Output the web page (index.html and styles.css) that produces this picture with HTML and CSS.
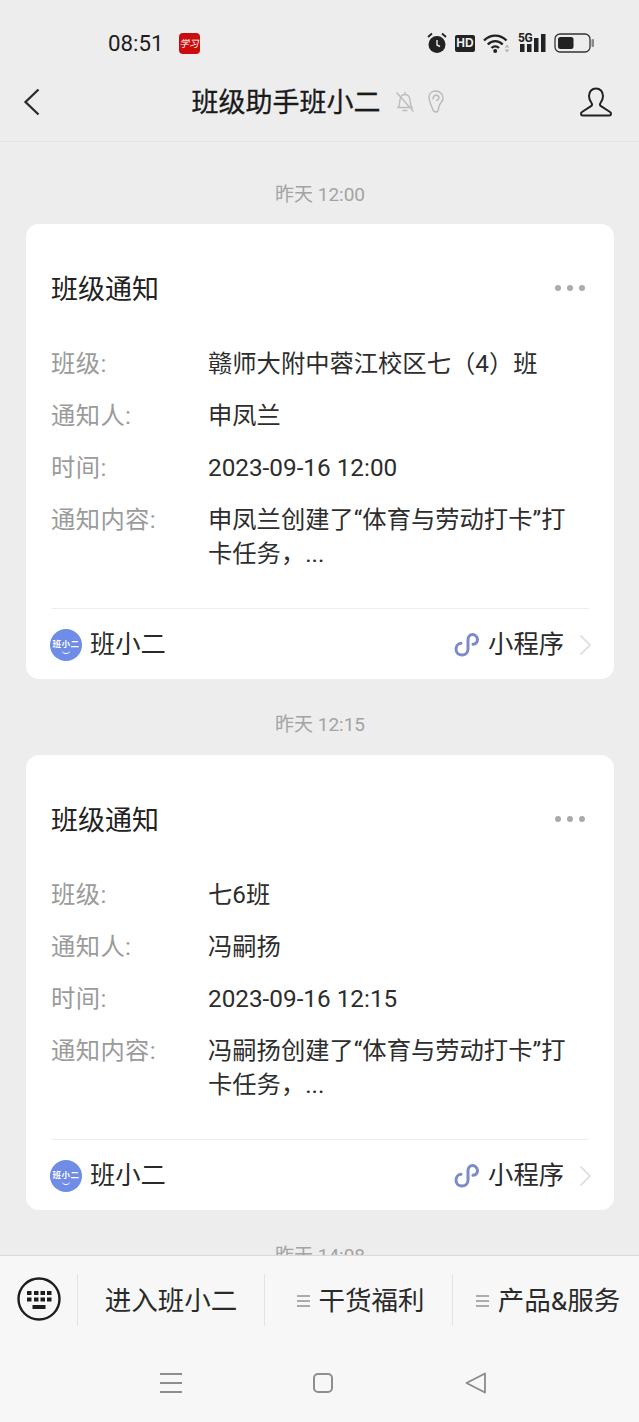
FILE: index.html
```html
<!DOCTYPE html>
<html lang="zh-CN">
<head>
<meta charset="utf-8">
<title>班级助手班小二</title>
<link rel="stylesheet" href="styles.css">
</head>
<body>
<div class="phone">
  <div class="statusbar">
    <div class="status-left">
      <span class="clock">08:51</span>
      <span class="app-badge">学习</span>
    </div>
    <div class="status-right">
      <svg class="i-alarm" viewBox="0 0 20 22"><circle cx="10" cy="12.500" r="8.500" fill="#222"/><path d="M10 8v5l3 1.500" fill="none" stroke="#eee" stroke-width="1.400"/><path d="M1 5l4-3.500M19 5l-4-3.500" stroke="#222" stroke-width="1.800" fill="none"/></svg>
      <span class="hd">HD</span>
      <svg class="i-wifi" viewBox="0 0 27 20"><path d="M1 7.500c6.500-6.500 16-6.500 22.500 0M4.800 11.500c4.500-4.500 10.400-4.500 14.900 0M8.500 15c2.200-2.200 5.300-2.200 7.500 0" fill="none" stroke="#222" stroke-width="2.400"/><circle cx="12.200" cy="18" r="2" fill="#222"/><path d="M21.500 14.500l2.500-3 2.500 3zM21.500 16.500l2.500 3 2.500-3z" fill="#b5b5b5"/></svg>
      <div class="signal">
        <span class="five-g">5G</span>
        <svg class="i-bars" viewBox="0 0 28 20"><path d="M2 11h4.500v8H2zM9 11h4.500v8H9zM16 5h4.500v14H16zM23 1h4.500v18H23z" fill="#222"/></svg>
      </div>
      <svg class="i-battery" viewBox="0 0 41 20"><rect x="1" y="1" width="35" height="18" rx="5" fill="none" stroke="#333" stroke-width="1.300"/><rect x="4" y="4" width="15.500" height="12" rx="2.500" fill="#222"/><rect x="37.500" y="6" width="2.500" height="8" rx="1" fill="#888"/></svg>
    </div>
  </div>

  <header class="navbar">
    <svg class="i-back" viewBox="0 0 18 28"><path d="M15.500 1.500L2.500 14l13 12.500" fill="none" stroke="#2b2b2b" stroke-width="2.300"/></svg>
    <div class="nav-center">
      <h1 class="nav-title">班级助手班小二</h1>
      <svg class="i-bell" viewBox="0 0 20 24"><path d="M3 17.500c2-2 1.500-5 2-8C5.500 6.500 7.500 4.500 10 4.500s4.500 2 5 5c.5 3 0 6 2 8zM10 2v2.500M7.500 20.500h5M1.500 2.500l17 19" fill="none" stroke="#bdbdbd" stroke-width="1.400"/></svg>
      <svg class="i-ear" viewBox="0 0 16 24"><path d="M7.500 1C3.500 1 1 3.800 1 7.500c0 3.500 2 6.500 3 10 .6 2.300 1.800 4.500 4 4.500 2.800 0 2.300-4 3.300-6.500.9-2.500 3.700-4 3.700-7.500C15 3.800 11.500 1 7.500 1zM5 9.500C4.800 7 6.200 5.300 8 5.300c1.700 0 3 1.100 3 2.700 0 1.500-1.800 2-3 2.700" fill="none" stroke="#b8b8b8" stroke-width="1.400"/></svg>
    </div>
    <svg class="i-user" viewBox="0 0 32 30"><path d="M16 1.500c-4 0-7 3-7 7.500 0 3 1 5 2.500 7 .9 1.200.6 2.500-.5 3.200L2 25c-1.500 1-1.200 3.500.5 3.500h27c1.700 0 2-2.500.5-3.500l-9-5.800c-1.100-.7-1.400-2-.5-3.200 1.500-2 2.500-4 2.500-7 0-4.500-3-7.500-7-7.500z" fill="none" stroke="#222" stroke-width="2"/></svg>
  </header>

  <main class="chat">
    <div class="stamp">昨天 12:00</div>
    <article class="card">
      <div class="card-head">
        <h2 class="card-title">班级通知</h2>
        <div class="dots"><span></span><span></span><span></span></div>
      </div>
      <dl class="fields">
        <div class="field"><dt>班级:</dt><dd>赣师大附中蓉江校区七（4）班</dd></div>
        <div class="field"><dt>通知人:</dt><dd>申凤兰</dd></div>
        <div class="field"><dt>时间:</dt><dd>2023-09-16 12:00</dd></div>
        <div class="field"><dt>通知内容:</dt><dd>申凤兰创建了“体育与劳动打卡”打卡任务，...</dd></div>
      </dl>
      <div class="card-foot">
        <span class="avatar">班小二</span>
        <span class="foot-name">班小二</span>
        <svg class="i-mini" viewBox="0 0 26 24"><path d="M7 10.300C4 10.500 2 13 2 16c0 3.500 2.700 6 6 6s6-2.500 6-6V6.500C14 3.800 16 1.500 18.500 1.500S23.500 3.800 23.500 6.500c0 2.700-2 4.500-4.500 4.800" fill="none" stroke="#7c8bc8" stroke-width="3" stroke-linecap="round"/></svg>
        <span class="foot-type">小程序</span>
        <svg class="i-chevron" viewBox="0 0 13 22"><path d="M1.500 1.500L11 11l-9.500 9.500" fill="none" stroke="#e2e2e2" stroke-width="2"/></svg>
      </div>
    </article>

    <div class="stamp stamp-next">昨天 12:15</div>
    <article class="card">
      <div class="card-head">
        <h2 class="card-title">班级通知</h2>
        <div class="dots"><span></span><span></span><span></span></div>
      </div>
      <dl class="fields">
        <div class="field"><dt>班级:</dt><dd>七6班</dd></div>
        <div class="field"><dt>通知人:</dt><dd>冯嗣扬</dd></div>
        <div class="field"><dt>时间:</dt><dd>2023-09-16 12:15</dd></div>
        <div class="field"><dt>通知内容:</dt><dd>冯嗣扬创建了“体育与劳动打卡”打卡任务，...</dd></div>
      </dl>
      <div class="card-foot">
        <span class="avatar">班小二</span>
        <span class="foot-name">班小二</span>
        <svg class="i-mini" viewBox="0 0 26 24"><path d="M7 10.300C4 10.500 2 13 2 16c0 3.500 2.700 6 6 6s6-2.500 6-6V6.500C14 3.800 16 1.500 18.500 1.500S23.500 3.800 23.500 6.500c0 2.700-2 4.500-4.500 4.800" fill="none" stroke="#7c8bc8" stroke-width="3" stroke-linecap="round"/></svg>
        <span class="foot-type">小程序</span>
        <svg class="i-chevron" viewBox="0 0 13 22"><path d="M1.500 1.500L11 11l-9.500 9.500" fill="none" stroke="#e2e2e2" stroke-width="2"/></svg>
      </div>
    </article>

    <div class="stamp stamp-next">昨天 14:08</div>
  </main>

  <footer class="bottom">
    <div class="menu">
      <div class="kb-cell">
        <svg class="i-keyboard" viewBox="0 0 44 44"><circle cx="22" cy="22" r="20.500" fill="none" stroke="#1d1d1d" stroke-width="2.400"/><path d="M10 14h4.500v4H10zM17 14h4.500v4H17zM23.500 14H28v4h-4.500zM30 14h4.500v4H30zM10 20.500h4.500v4H10zM17 20.500h4.500v4H17zM23.500 20.500H28v4h-4.500zM30 20.500h4.500v4H30zM15.500 28h13v4h-13z" fill="#1d1d1d"/></svg>
      </div>
      <div class="menu-item">进入班小二</div>
      <div class="menu-item menu-item-sub"><span class="burger"><i></i><i></i><i></i></span>干货福利</div>
      <div class="menu-item menu-item-sub"><span class="burger"><i></i><i></i><i></i></span>产品&amp;服务</div>
    </div>
    <nav class="sysnav">
      <span class="nav-lines"><i></i><i></i><i></i></span>
      <span class="nav-square"></span>
      <svg class="i-tri" viewBox="0 0 22 22"><path d="M20 1.500v19L1.500 11z" fill="none" stroke="#8a8a8a" stroke-width="1.800" stroke-linejoin="round"/></svg>
    </nav>
  </footer>
</div>
</body>
</html>
```
FILE: styles.css
```css
* { box-sizing: border-box; }
html, body { margin: 0; padding: 0; }
body {
  font-family: Roboto, "Noto Sans CJK SC", sans-serif;
  color: #222;
  background: #ededed;
}
svg { display: block; flex: none; }
h1, h2, dl, dd, dt { margin: 0; font-weight: 400; }

.phone {
  width: 639px;
  height: 1422px;
  display: flex;
  flex-direction: column;
  overflow: hidden;
  background: #ededed;
}

/* status bar */
.statusbar {
  height: 72px;
  flex: none;
  display: flex;
  justify-content: space-between;
  align-items: flex-start;
  padding: 30px 44px 0 108px;
}
.status-left { display: flex; align-items: center; gap: 15px; height: 26px; }
.clock { font-size: 22.300px; line-height: 26px; color: #1c1c1c; }
.app-badge {
  width: 21px; height: 21px;
  border-radius: 4px;
  background: #c90d0d;
  color: #fff;
  font-size: 9.500px;
  font-style: italic;
  line-height: 21px;
  text-align: center;
  white-space: nowrap;
  overflow: hidden;
}
.status-right { display: flex; align-items: center; gap: 8px; height: 26px; }
.i-alarm { width: 20px; height: 22px; }
.hd {
  width: 20px; height: 17px;
  border-radius: 2px;
  background: #222;
  color: #eee;
  font: 700 12px/17px "Liberation Sans", sans-serif;
  text-align: center;
}
.i-wifi { width: 27px; height: 20px; }
.signal { position: relative; width: 28px; height: 20px; }
.five-g {
  position: absolute; left: 0; top: -1px;
  font: 700 12px/12px "Roboto", sans-serif;
  color: #222;
  letter-spacing: -0.5px;
}
.i-bars { width: 28px; height: 20px; }
.i-battery { width: 41px; height: 20px; }

/* nav bar */
.navbar {
  height: 70px;
  flex: none;
  display: grid;
  grid-template-columns: 1fr auto 1fr;
  align-items: center;
  padding: 0 27px 9px 23px;
  border-bottom: 1px solid #e2e2e2;
}
.i-back { width: 18px; height: 28px; }
.nav-center { display: flex; align-items: center; }
.nav-title {
  font-size: 27px;
  line-height: 38px;
  color: #1a1a1a;
  -webkit-text-stroke: 0.3px #1a1a1a;
  padding-top: 2px;
}
.i-bell { width: 20px; height: 24px; margin-left: 14px; }
.i-ear { width: 16px; height: 24px; margin-left: 13px; }
.i-user { width: 32px; height: 30px; justify-self: end; }

/* chat */
.chat {
  flex: 1;
  min-height: 0;
  overflow: hidden;
  padding: 39px 25px 0 26px;
}
.stamp {
  height: 28px;
  margin-bottom: 15px;
  font-size: 19px;
  line-height: 28px;
  text-align: center;
  color: #a3a3a3;
}
.stamp-next { margin-top: 32px; margin-bottom: 16px; }
.card {
  height: 455px;
  border-radius: 13px;
  background: #fff;
  padding: 48px 25px 0 26px;
}
.card-head {
  display: flex;
  justify-content: space-between;
  align-items: center;
  height: 36px;
}
.card-title { font-size: 27px; line-height: 36px; color: #222; margin-left: -1px; }
.dots { display: flex; gap: 5.500px; margin: 0 4px 4px 0; }
.dots span { width: 6.500px; height: 6.500px; border-radius: 50%; background: #ababab; }

.fields {
  display: flex;
  flex-direction: column;
  gap: 18px;
  margin-top: 39px;
  height: 224px;
}
.field { display: flex; font-size: 24.300px; line-height: 34px; margin-left: -1px; }
.field dt { width: 157px; flex: none; color: #9b9b9b; letter-spacing: 0.4px; }
.field dd { flex: 1; color: #2d2d2d; padding-right: 20px; }

.card-foot {
  margin-top: 37px;
  height: 71px;
  border-top: 1px solid #ededed;
  display: flex;
  align-items: center;
  padding-top: 1px;
}
.avatar {
  position: relative;
  width: 32px; height: 32px;
  margin-left: -2px;
  border-radius: 50%;
  background: #6f8ce6;
  color: #fff;
  font-size: 8.500px;
  font-weight: 700;
  letter-spacing: 0.5px;
  line-height: 30px;
  text-align: center;
  white-space: nowrap;
  overflow: hidden;
}
.avatar::after {
  content: "";
  position: absolute;
  left: 12px; top: 20px;
  width: 8px; height: 4px;
  border-bottom: 1.500px solid #fff;
  border-radius: 0 0 6px 6px;
}
.foot-name { margin-left: 8px; font-size: 25.300px; line-height: 34px; color: #2a2a2a; }
.i-mini { width: 26px; height: 24px; margin-left: auto; }
.foot-type { margin-left: 8px; font-size: 25.300px; line-height: 34px; color: #2a2a2a; }
.i-chevron { width: 13px; height: 22px; margin: 0 -3px 0 15px; }

/* bottom */
.bottom {
  height: 167px;
  flex: none;
  background: #f7f7f7;
  border-top: 1px solid #d9d9d9;
}
.menu {
  display: grid;
  grid-template-columns: 77px 187px 188px 187px;
  padding-top: 18px;
  height: 70px;
}
.kb-cell { display: flex; justify-content: center; align-items: center; height: 52px; padding-bottom: 2px; }
.i-keyboard { width: 44px; height: 44px; }
.menu-item {
  height: 52px;
  border-left: 1px solid #e3e3e3;
  display: flex;
  align-items: center;
  justify-content: center;
  gap: 9px;
  font-size: 26.500px;
  line-height: 50px;
  padding-top: 1px;
  color: #2a2a2a;
  white-space: nowrap;
}
.menu-item-sub { padding-left: 4px; }
.burger { display: flex; flex-direction: column; gap: 3px; width: 13px; }
.burger i { display: block; height: 2px; background: #ababab; }

.sysnav {
  display: grid;
  grid-template-columns: 1fr 1fr 1fr;
  width: 317px;
  margin: 46px 0 0 160px;
  align-items: center;
  height: 22px;
}
.nav-lines { display: flex; flex-direction: column; gap: 7px; width: 22px; }
.nav-lines i { display: block; height: 2px; background: #8e8e8e; }
.nav-square {
  width: 20px; height: 20px;
  justify-self: center;
  margin-left: 10px;
  border: 2px solid #8e8e8e;
  border-radius: 5px;
}
.i-tri { width: 22px; height: 22px; justify-self: end; margin-right: -10px; }
```
